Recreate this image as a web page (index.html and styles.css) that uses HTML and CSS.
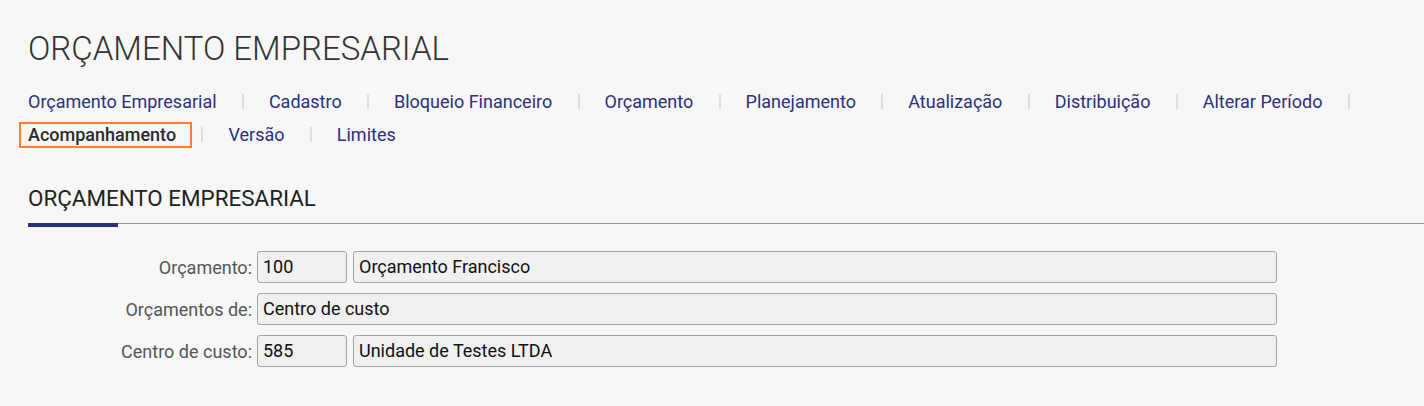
FILE: index.html
```html
<!DOCTYPE html>
<html lang="pt-BR">
<head>
<meta charset="utf-8">
<title>Orçamento Empresarial</title>
<link rel="stylesheet" href="styles.css">
</head>
<body>
<div class="page">
  <h1 class="title">ORÇAMENTO EMPRESARIAL</h1>
  <ul class="menu">
    <li class="menu-item"><a class="menu-link" href="#">Orçamento Empresarial</a></li>
    <li class="menu-item"><a class="menu-link" href="#">Cadastro</a></li>
    <li class="menu-item"><a class="menu-link" href="#">Bloqueio Financeiro</a></li>
    <li class="menu-item"><a class="menu-link" href="#">Orçamento</a></li>
    <li class="menu-item"><a class="menu-link" href="#">Planejamento</a></li>
    <li class="menu-item"><a class="menu-link" href="#">Atualização</a></li>
    <li class="menu-item"><a class="menu-link" href="#">Distribuição</a></li>
    <li class="menu-item"><a class="menu-link" href="#">Alterar Período</a></li>
    <li class="menu-item"><a class="menu-link active" href="#">Acompanhamento</a></li>
    <li class="menu-item"><a class="menu-link" href="#">Versão</a></li>
    <li class="menu-item last"><a class="menu-link" href="#">Limites</a></li>
  </ul>
  <div class="section">
    <h2 class="section-title">ORÇAMENTO EMPRESARIAL</h2>
    <div class="section-rule"><span class="section-bar"></span></div>
  </div>
  <div class="form">
    <label class="label">Orçamento:</label>
    <div class="field-group">
      <div class="input code">100</div>
      <div class="input wide">Orçamento Francisco</div>
    </div>
    <label class="label">Orçamentos de:</label>
    <div class="field-group">
      <div class="input full">Centro de custo</div>
    </div>
    <label class="label">Centro de custo:</label>
    <div class="field-group">
      <div class="input code">585</div>
      <div class="input wide">Unidade de Testes LTDA</div>
    </div>
  </div>
</div>
</body>
</html>
```
FILE: styles.css
```css
* { box-sizing: border-box; }
html, body {
  margin: 0;
  background: #f7f7f7;
  font-family: Roboto, "Liberation Sans", sans-serif;
}
.page {
  padding: 27px 0 0 28px;
}
.title {
  margin: 0;
  font-size: 33px;
  font-weight: 300;
  color: #333;
  line-height: 44px;
}
.menu {
  display: flex;
  flex-wrap: wrap;
  align-items: center;
  list-style: none;
  padding: 0;
  margin: 14px 0 0;
  width: 1396px;
}
.menu-item {
  display: flex;
  align-items: center;
}
.menu-item::after {
  content: "";
  width: 2px;
  height: 15px;
  background: #dedede;
  margin: 0 25px 0 25.3px;
}
.menu-item.last::after {
  display: none;
}
.menu-link {
  font-size: 18px;
  line-height: 33px;
  color: #2e2f7d;
  text-decoration: none;
  position: relative;
}
.menu-link.active {
  color: #2b2b2b;
  font-weight: 500;
}
.menu-link.active::after {
  content: "";
  position: absolute;
  left: -9px;
  right: -16px;
  top: 4px;
  bottom: 3px;
  border: 2px solid #ff7f27;
}
.section {
  margin-top: 33px;
}
.section-title {
  margin: 0;
  font-size: 22.4px;
  font-weight: 400;
  color: #222;
  line-height: 28px;
}
.section-rule {
  margin-top: 11px;
  border-bottom: 1px solid #999;
  position: relative;
  height: 1px;
}
.section-bar {
  position: absolute;
  left: 0;
  top: 0;
  width: 90px;
  height: 4px;
  background: #2b3182;
}
.form {
  display: grid;
  grid-template-columns: 224px 1020px;
  column-gap: 5px;
  row-gap: 10px;
  margin-top: 27px;
  align-items: center;
}
.label {
  text-align: right;
  font-size: 18px;
  color: #555;
}
.field-group {
  display: flex;
  gap: 6px;
}
.input {
  height: 32px;
  line-height: 30px;
  padding: 0 5px;
  background: #f0f0f0;
  border: 1px solid #a3a3a3;
  border-radius: 3px;
  font-size: 18px;
  color: #111;
}
.input.code { width: 90px; }
.input.wide { width: 924px; }
.input.full { width: 1020px; }
```
